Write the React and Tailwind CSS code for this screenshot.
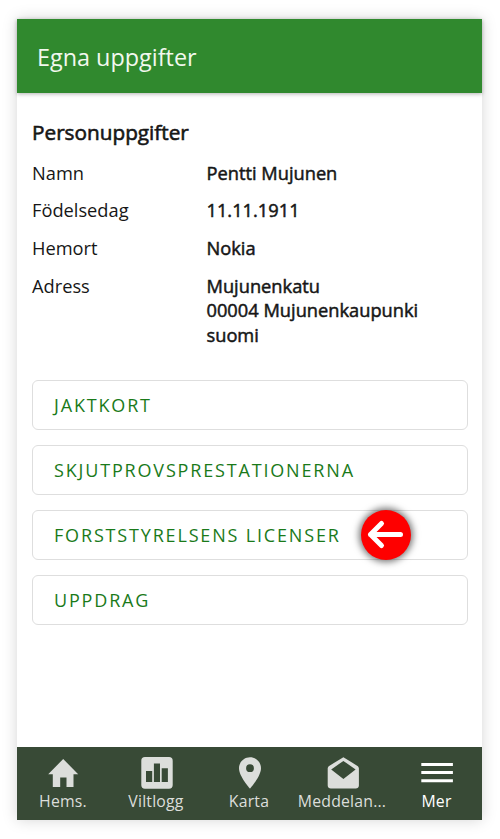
const details = [
  { label: "Namn", lines: ["Pentti Mujunen"] },
  { label: "Födelsedag", lines: ["11.11.1911"] },
  { label: "Hemort", lines: ["Nokia"] },
  { label: "Adress", lines: ["Mujunenkatu", "00004 Mujunenkaupunki", "suomi"] },
];

const links = [
  { label: "JAKTKORT" },
  { label: "SKJUTPROVSPRESTATIONERNA" },
  { label: "FORSTSTYRELSENS LICENSER", marked: true },
  { label: "UPPDRAG" },
];

const tabs = [
  { label: "Hems.", path: "M15.2 2L.2 17.2h4.6V30h7.4V20.5h6.3V30h7V17.2h4.7z" },
  {
    label: "Viltlogg",
    path: "M4 0h24a3.7 3.7 0 0 1 3.7 3.7v24.4a3.7 3.7 0 0 1-3.7 3.7H4a3.7 3.7 0 0 1-3.7-3.7V3.7A3.7 3.7 0 0 1 4 0zM5 14v11h6.2V14zM12.9 6.5V25H19V6.5zM20.7 11.2V25h6.2V11.2z",
  },
  {
    label: "Karta",
    path: "M16 .2C9.9.2 5 5.1 5 11.2 5 19.4 16 31.6 16 31.6s11-12.2 11-20.4C27 5.1 22.1.2 16 .2zm0 14.9a3.9 3.9 0 1 1 0-7.8 3.9 3.9 0 0 1 0 7.8z",
  },
  {
    label: "Meddelan...",
    path: "M16.4 .2L2.1 8.9C1.2 9.5.7 10.5.7 11.6v16.8c0 1.7 1.4 3.1 3.1 3.1h25c1.7 0 3.1-1.4 3.1-3.1V11.6c0-1.1-.5-2.1-1.4-2.7zM16.4 3.9l12.2 8.6L16.4 22 4.2 12.5z",
  },
  { label: "Mer", path: "M.3 6h31.6v3H.3zM.3 14.1h31.6v3H.3zM.3 22.2h31.6v3H.3z", active: true },
];

function Marker() {
  return (
    <span className="absolute top-[-1px] left-[328px] flex size-[50px] items-center justify-center rounded-full bg-[#fe0000] shadow-[0_0_7px_2px_rgba(0,0,0,0.55)]">
      <svg viewBox="0 0 50 50" className="size-[50px]" fill="none" stroke="white" strokeWidth="5" strokeLinecap="round" strokeLinejoin="round">
        <path d="M39.5 24.5H9.5M20.5 13.5L9.5 24.5l11 11" />
      </svg>
    </span>
  );
}

export default function App() {
  return (
    <div className="h-[839px] w-[500px] bg-white pt-[19px] pl-[17px] font-['Open_Sans','Noto_Sans',sans-serif] text-[#161616]">
      <div className="flex h-[801px] w-[465px] flex-col bg-white shadow-[0_0_14px_rgba(0,0,0,0.17)]">
        <header className="flex h-[74px] shrink-0 items-center bg-[#30892e] pt-[3px] pl-5 text-[23.4px] text-[#f2f8ee] shadow-[0_1px_4px_rgba(0,0,0,0.3)]">
          Egna uppgifter
        </header>

        <main className="flex-1 px-[15px] pt-6">
          <h1 className="text-[20.75px] leading-[30px] [-webkit-text-stroke:0.6px_currentColor]">Personuppgifter</h1>
          <dl className="mt-[13.7px] flex flex-col gap-[13.2px] text-[18.25px] leading-[24.5px]">
            {details.map(({ label, lines }) => (
              <div key={label} className="flex">
                <dt className="w-[174.5px] shrink-0">{label}</dt>
                <dd className="whitespace-nowrap [-webkit-text-stroke:0.5px_currentColor]">
                  {lines.map((line) => (
                    <div key={line}>{line}</div>
                  ))}
                </dd>
              </div>
            ))}
          </dl>

          <div className="mt-[33px] flex flex-col gap-[15.5px]">
            {links.map(({ label, marked }) => (
              <button
                key={label}
                className="relative flex h-[49.5px] w-[436px] items-center rounded-md border border-[#dedede] pt-px pl-[21px] text-[18px] tracking-[1.83px] whitespace-nowrap text-[#1a7a1a]"
              >
                {label}
                {marked && <Marker />}
              </button>
            ))}
          </div>
        </main>

        <nav className="grid h-[73px] shrink-0 grid-cols-5 bg-[#384a36]">
          {tabs.map(({ label, path, active }) => (
            <div key={label} className={`flex flex-col items-center pt-2.5 whitespace-nowrap ${active ? "pl-px text-white" : "text-[#dcdedb]"}`}>
              <svg viewBox="0 0 32 32" className="ml-px size-8 shrink-0" fill="currentColor" fillRule="evenodd">
                <path d={path} />
              </svg>
              <span className={`mt-0.5 text-[15.8px] leading-5 tracking-[0.2px] ${active ? "ml-px" : "mr-px"}`}>{label}</span>
            </div>
          ))}
        </nav>
      </div>
    </div>
  );
}
